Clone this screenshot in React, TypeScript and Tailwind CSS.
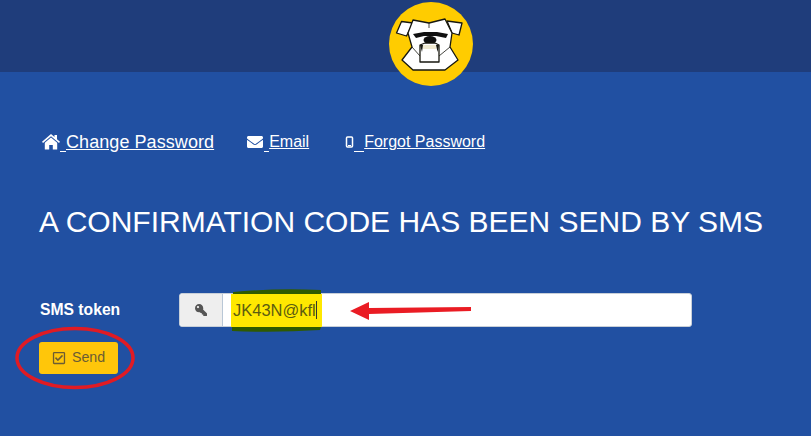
import React from "react";
import { FaEnvelope, FaKey, FaRegCheckSquare } from "react-icons/fa";

const HomeIcon = () => (
  <svg viewBox="0 0 18 16" className="h-[16px] w-[18px]" fill="currentColor">
    <path d="M9 0 L12.5 3 L12.5 1 L15 1 L15 5.2 L18 7.8 L17 9 L9 2.2 L1 9 L0 7.8 Z" />
    <path d="M9 3.6 L15.2 8.8 L15.2 15.5 L10.8 15.5 L10.8 11 L7.2 11 L7.2 15.5 L2.8 15.5 L2.8 8.8 Z" />
  </svg>
);

const MobileIcon = () => (
  <svg viewBox="0 0 9 12" className="h-[12px] w-[9px]" fill="none" stroke="currentColor">
    <rect x="1.5" y="1" width="6" height="10" rx="1" strokeWidth="1.5" />
    <path d="M3 9.5 H6" strokeWidth="1" />
  </svg>
);

const links = [
  { icon: <HomeIcon />, label: "Change Password", size: "text-[18px] tracking-[0.07px]", gap: "w-[6px]", margin: "mr-[32px]" },
  { icon: <FaEnvelope className="h-[16px] w-[18px]" />, label: "Email", size: "text-[16px]", gap: "w-[5px]", margin: "mr-[36px]" },
  { icon: <MobileIcon />, label: "Forgot Password", size: "text-[16px]", gap: "w-[10px]", margin: "" },
];

const Logo = () => (
  <svg viewBox="0 0 84 84" className="relative z-10 ml-[50px] mt-[2px] h-[84px] w-[84px] shrink-0">
    <circle cx="42" cy="42" r="42" fill="#ffcc00" />
    <g stroke="#17170f" strokeWidth="1.3" strokeLinejoin="round" fill="#ffffff">
      <path d="M12.5 19.5 L7.5 31 L17.5 34 L24 21 Z" />
      <path d="M58 19 L73 21 L70 33 L63 31 Z" />
      <path d="M24 18 L40 21 L56 17 L63 31 L61 45 L69 58 L56 68 L24 68 L13 58 L23 45 L19 31 Z" />
    </g>
    <path d="M40 21 L40 26 M23 45 L31 54 M61 45 L50 54" stroke="#17170f" strokeWidth="0.8" fill="none" />
    <path d="M24 32 L35 30 L48 30 L59 32 L57 36 L47 34 L35 34 L27 36 Z" fill="#101010" />
    <ellipse cx="41" cy="38" rx="6.5" ry="4" fill="#101010" />
    <path d="M31 43 L36 41 L46 41 L50 43 L50 60 L31 60 Z" fill="#ffffff" stroke="#17170f" strokeWidth="1.3" strokeLinejoin="round" />
    <path d="M31 43 L34 43 L33 50 Z M50 43 L47 43 L48.5 50 Z" fill="#17170f" />
    <path d="M34 43 H47 V47 H34 Z" fill="#efe9d0" />
  </svg>
);

const App = () => {
  return (
    <div className="flex h-[436px] w-[811px] flex-col overflow-hidden bg-[#2150a2] font-['Liberation_Sans',sans-serif] text-white">
      <header className="flex h-[72px] shrink-0 justify-center bg-[#1f3d7b]">
        <Logo />
      </header>

      <nav className="mt-[59px] flex h-[22px] items-center pl-[42px]">
        {links.map((link) => (
          <a key={link.label} href="#" className={`flex items-center underline ${link.size} ${link.margin}`}>
            {link.icon}
            <span className={`${link.gap} h-[19px] border-b border-white`} />
            {link.label}
          </a>
        ))}
      </nav>

      <h1 className="mt-[51px] pl-[39px] text-[30px] leading-[36px]">A CONFIRMATION CODE HAS BEEN SEND BY SMS</h1>

      <form className="relative mt-[53px] pl-[40px]">
        <div className="flex h-[34px] items-center">
          <label className="w-[139px] text-[15.7px] font-bold">SMS token</label>
          <div className="relative flex h-[34px] w-[513px] rounded-[3px] border border-[#c8cfd8] bg-white">
            <span className="flex w-[43px] items-center justify-center rounded-l-[3px] border-r border-[#b9c7d6] bg-[#eeeeee] text-[#555555]">
              <FaKey className="h-[12px] w-[12px] -scale-x-100" />
            </span>
            {/* highlighter stroke, sits under the typed text and spills over the field */}
            <svg viewBox="0 0 100 44" className="absolute left-[50px] top-[-5px] h-[44px] w-[100px]">
              <path d="M3 3 Q45 -1 91 1 L91 5 L91 38 L90 41 Q45 44 2 42 Z" fill="#2f5a00" />
              <path d="M1 5 L92 5 L92 38 L1 38 Z" fill="#ffe800" />
            </svg>
            <span className="relative flex items-center pl-[10px] text-[16.5px] text-[#5c5c10]">
              JK43N@kfl
              <span className="h-[18px] w-px bg-[#333333]" />
            </span>
          </div>
        </div>

        <button
          type="button"
          className="-ml-px mt-[15px] flex h-[32px] w-[79px] items-center justify-center gap-[6px] rounded-[3px] bg-[#ffc60a] text-[14.2px] text-[#6b5c34]"
        >
          <FaRegCheckSquare className="h-[14px] w-[14px]" />
          Send
        </button>

        {/* annotations drawn over the screenshot */}
        <svg viewBox="0 0 811 146" className="pointer-events-none absolute left-0 top-[-3px] h-[146px] w-[811px]">
          <path d="M350 21 L369 12 L369 18 L471 17 L471 21 L369 24 L369 30 Z" fill="#ea1c24" />
          <ellipse cx="75" cy="68" rx="58" ry="29.5" fill="none" stroke="#e01b24" strokeWidth="3.5" />
        </svg>
      </form>
    </div>
  );
};

export default App;
